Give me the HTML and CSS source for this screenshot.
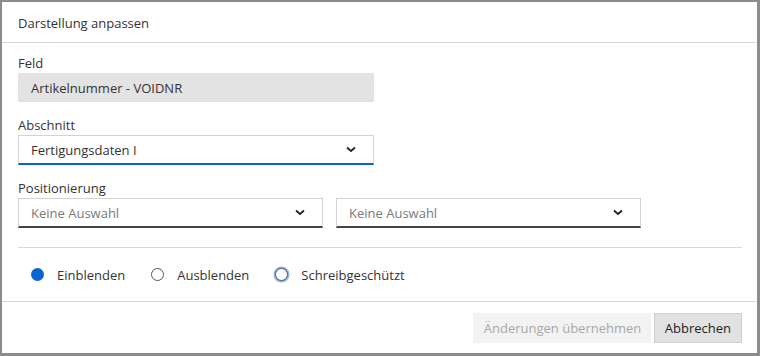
FILE: index.html
```html
<!DOCTYPE html>
<html lang="de">
<head>
<meta charset="utf-8">
<link rel="stylesheet" href="styles.css">
</head>
<body>
<div class="dialog">
  <div class="dialog-header">Darstellung anpassen</div>
  <div class="dialog-body">
    <div class="field">
      <div class="label">Feld</div>
      <div class="input readonly">Artikelnummer - VOIDNR</div>
    </div>
    <div class="field">
      <div class="label">Abschnitt</div>
      <div class="input select active">
        <span>Fertigungsdaten I</span>
        <svg class="chev" width="10" height="7" viewBox="0 0 10 7"><path d="M1 1.5 L5 5 L9 1.5" fill="none" stroke="#222" stroke-width="1.8"/></svg>
      </div>
    </div>
    <div class="field">
      <div class="label">Positionierung</div>
      <div class="row">
        <div class="input select dark half">
          <span class="ph">Keine Auswahl</span>
          <svg class="chev" width="10" height="7" viewBox="0 0 10 7"><path d="M1 1.5 L5 5 L9 1.5" fill="none" stroke="#222" stroke-width="1.8"/></svg>
        </div>
        <div class="input select dark half">
          <span class="ph">Keine Auswahl</span>
          <svg class="chev" width="10" height="7" viewBox="0 0 10 7"><path d="M1 1.5 L5 5 L9 1.5" fill="none" stroke="#222" stroke-width="1.8"/></svg>
        </div>
      </div>
    </div>
    <div class="sep"></div>
    <div class="radios">
      <label class="radio"><span class="dot checked"></span>Einblenden</label>
      <label class="radio"><span class="dot"></span>Ausblenden</label>
      <label class="radio"><span class="dot focus"></span>Schreibgeschützt</label>
    </div>
  </div>
  <div class="dialog-footer">
    <button class="btn disabled">Änderungen übernehmen</button>
    <button class="btn">Abbrechen</button>
  </div>
</div>
</body>
</html>
```
FILE: styles.css
```css
html, body {
  margin: 0;
  padding: 0;
  background: #fff;
}
body {
  font-family: "Open Sans", "Liberation Sans", sans-serif;
  font-size: 13px;
  color: #333;
}
.dialog {
  box-sizing: border-box;
  width: 760px;
  height: 356px;
  border-style: solid;
  border-color: #8c8c8c;
  border-width: 2px 3px 3px 2px;
  display: flex;
  flex-direction: column;
  background: #fff;
}
.dialog-header {
  height: 41px;
  box-sizing: border-box;
  border-bottom: 1px solid #d8d8d8;
  padding: 12px 16px 0;
  font-size: 13px;
  line-height: 18px;
}
.dialog-body {
  padding: 11px 15px 0 16px;
  flex: 1;
}
.field { margin-bottom: 14px; }
.label {
  line-height: 18px;
  margin-bottom: 1px;
}
.input {
  box-sizing: border-box;
  height: 29px;
  width: 356px;
  padding: 0 12px 0 13px;
  display: flex;
  align-items: center;
  justify-content: space-between;
  line-height: 18px;
}
.readonly {
  background: #e3e3e3;
}
.select {
  height: 30px;
  border: 1px solid #d2d2d2;
  border-bottom-width: 2px;
  padding-left: 12px;
  padding-right: 17px;
}
.select.active { border-bottom-color: #0a63cf; }
.select.dark { border-bottom-color: #454545; }
.row {
  display: flex;
  gap: 13px;
}
.half { width: 305px; }
.ph { color: #7a7a7a; }
.chev { display: block; }
.sep {
  height: 1px;
  background: #d8d8d8;
  margin-top: 19px;
}
.radios {
  display: flex;
  align-items: center;
  height: 53px;
  padding-left: 13px;
}
.radio {
  display: flex;
  align-items: center;
  margin-right: 26px;
}
.dot {
  box-sizing: border-box;
  width: 13px;
  height: 13px;
  border-radius: 50%;
  border: 1.5px solid #555;
  background: #fff;
  margin-right: 13px;
}
.dot.checked {
  border: none;
  background: #0a64d4;
}
.dot.focus {
  box-shadow: 0 0 0 1.5px #8db7ee;
}
.dialog-footer {
  border-top: 1px solid #d8d8d8;
  height: 52px;
  box-sizing: border-box;
  display: flex;
  justify-content: flex-end;
  align-items: flex-start;
  padding: 11px 15px 0 0;
  gap: 3px;
}
.btn {
  font-family: inherit;
  font-size: 13px;
  height: 30px;
  box-sizing: border-box;
  border: 1px solid #cfcfcf;
  background: #e2e2e2;
  color: #222;
  padding: 0 10px;
  line-height: 18px;
  white-space: nowrap;
}
.btn.disabled {
  background: #f3f3f3;
  border-color: #f3f3f3;
  color: #a8a8a8;
  width: 178px;
}
```
